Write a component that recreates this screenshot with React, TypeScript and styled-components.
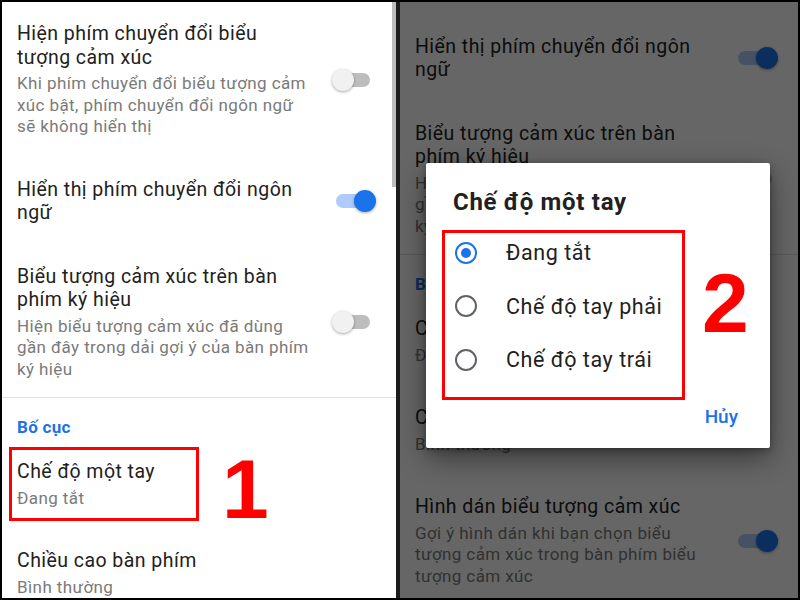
import styled, { createGlobalStyle } from "styled-components";

const GlobalStyle = createGlobalStyle`
  html, body {
    margin: 0;
    padding: 0;
    background: #000;
  }
  body {
    font-family: Roboto, "Noto Sans", sans-serif;
  }
`;

type Pref = {
  title: string;
  summary?: string;
  toggle?: "on" | "off";
  marked?: boolean;
};

type Section = { category?: string; items: Pref[] };

const sections: Section[] = [
  {
    items: [
      {
        title: "Hiện phím chuyển đổi biểu tượng cảm xúc",
        summary: "Khi phím chuyển đổi biểu tượng cảm xúc bật, phím chuyển đổi ngôn ngữ sẽ không hiển thị",
        toggle: "off",
      },
      { title: "Hiển thị phím chuyển đổi ngôn ngữ", toggle: "on" },
      {
        title: "Biểu tượng cảm xúc trên bàn phím ký hiệu",
        summary: "Hiện biểu tượng cảm xúc đã dùng gần đây trong dải gợi ý của bàn phím ký hiệu",
        toggle: "off",
      },
    ],
  },
  {
    category: "Bố cục",
    items: [
      { title: "Chế độ một tay", summary: "Đang tắt", marked: true },
      { title: "Chiều cao bàn phím", summary: "Bình thường" },
      {
        title: "Hình dán biểu tượng cảm xúc",
        summary: "Gợi ý hình dán khi bạn chọn biểu tượng cảm xúc trong bàn phím biểu tượng cảm xúc",
        toggle: "on",
      },
    ],
  },
];

const oneHandOptions = ["Đang tắt", "Chế độ tay phải", "Chế độ tay trái"];

const Frame = styled.div`
  box-sizing: border-box;
  width: 800px;
  height: 600px;
  border: 2px solid #000;
  display: grid;
  grid-template-columns: 394px 4px 1fr;
  background: #000;
  overflow: hidden;
`;

const Panel = styled.div<{ $dimmed?: boolean }>`
  position: relative;
  background: #fff;
  overflow: hidden;
  height: 596px;

  ${(p) =>
    p.$dimmed &&
    `
    &::after {
      content: "";
      position: absolute;
      inset: 0;
      background: rgba(0, 0, 0, 0.6);
    }
  `}
`;

const Gutter = styled.div`
  background: #1c1c1c;
`;

const Scrollbar = styled.div`
  position: absolute;
  right: 0;
  top: 0;
  width: 4px;
  height: 185px;
  background: #bdbdbd;
`;

const List = styled.div<{ $scroll: number }>`
  margin-top: ${(p) => -p.$scroll}px;
`;

const Group = styled.section<{ $ruled?: boolean }>`
  border-top: ${(p) => (p.$ruled ? "1px solid #e0e0e0" : "none")};
`;

const Category = styled.div`
  padding: 18px 16px 2px 15px;
  font-size: 17px;
  letter-spacing: 0.3px;
  line-height: 22px;
  font-weight: 700;
  color: #1a73e8;
`;

const Row = styled.div`
  position: relative;
  display: flex;
  align-items: center;
  gap: 22px;
  padding: 20px 20px 20px 15px;

  &:last-child {
    padding-bottom: 17px;
  }
`;

const TextCol = styled.div`
  flex: 1;
  min-width: 0;
`;

const Title = styled.div`
  font-size: 19.5px;
  letter-spacing: 0.45px;
  line-height: 23.5px;
  color: #212121;
`;

const Summary = styled.div`
  margin-top: 4px;
  font-size: 17px;
  letter-spacing: 0.4px;
  line-height: 21.5px;
  color: #7a7a7a;
`;

const Switch = styled.span<{ $on: boolean }>`
  position: relative;
  flex: none;
  width: 44px;
  height: 22px;

  &::before {
    content: "";
    position: absolute;
    left: 4px;
    top: 4px;
    width: 34px;
    height: 14px;
    border-radius: 7px;
    background: ${(p) => (p.$on ? "#aecbfa" : "#bdbdbd")};
  }

  &::after {
    content: "";
    position: absolute;
    top: 0;
    left: ${(p) => (p.$on ? "22px" : "0")};
    width: 22px;
    height: 22px;
    border-radius: 50%;
    background: ${(p) => (p.$on ? "#1a73e8" : "#f1f1f1")};
    box-shadow: 0 1px 3px rgba(0, 0, 0, 0.35);
  }
`;

const RedBox = styled.div<{ $left: number; $top: number; $w: number; $h: number }>`
  position: absolute;
  left: ${(p) => p.$left}px;
  top: ${(p) => p.$top}px;
  width: ${(p) => p.$w}px;
  height: ${(p) => p.$h}px;
  box-sizing: border-box;
  border: 3px solid #f00;
  pointer-events: none;
`;

const BigNumber = styled.div<{ $left: number; $top: number }>`
  position: absolute;
  left: ${(p) => p.$left}px;
  top: ${(p) => p.$top}px;
  font-family: "Liberation Sans", Arial, sans-serif;
  font-weight: 700;
  font-size: 84px;
  line-height: 1;
  color: #f00;
`;

const Dialog = styled.div`
  position: absolute;
  z-index: 2;
  left: 26px;
  top: 161px;
  width: 344px;
  height: 285px;
  box-sizing: border-box;
  background: #fff;
  border-radius: 2px;
  box-shadow: 0 10px 28px rgba(0, 0, 0, 0.45), 0 2px 6px rgba(0, 0, 0, 0.3);
`;

const DialogTitle = styled.div`
  padding: 25px 24px 0 27px;
  font-size: 24px;
  letter-spacing: 0.7px;
  line-height: 28px;
  font-weight: 700;
  color: #212121;
`;

const Options = styled.div`
  margin-top: 10px;
`;

const Option = styled.label`
  display: flex;
  align-items: center;
  gap: 29px;
  height: 53.5px;
  padding-left: 29px;
  font-size: 21.5px;
  letter-spacing: 0.55px;
  color: #212121;
`;

const Radio = styled.span<{ $checked: boolean }>`
  flex: none;
  box-sizing: border-box;
  width: 22px;
  height: 22px;
  border-radius: 50%;
  border: 2px solid ${(p) => (p.$checked ? "#1a73e8" : "#5f6368")};
  display: grid;
  place-items: center;

  &::after {
    content: "";
    width: 10px;
    height: 10px;
    border-radius: 50%;
    background: ${(p) => (p.$checked ? "#1a73e8" : "transparent")};
  }
`;

const Actions = styled.div`
  display: flex;
  justify-content: flex-end;
  padding: 18px 32px 18px;
`;

const TextButton = styled.span`
  font-size: 19px;
  line-height: 24px;
  font-weight: 500;
  color: #1a73e8;
`;

const SettingsList = ({ scroll, annotate }: { scroll: number; annotate?: boolean }) => (
  <List $scroll={scroll}>
    {sections.map((section, i) => (
      <Group key={i} $ruled={i > 0}>
        {section.category && <Category>{section.category}</Category>}
        {section.items.map((item) => (
          <Row key={item.title}>
            <TextCol>
              <Title>{item.title}</Title>
              {item.summary && <Summary>{item.summary}</Summary>}
            </TextCol>
            {item.toggle && <Switch $on={item.toggle === "on"} />}
            {annotate && item.marked && (
              <>
                <RedBox $left={7} $top={7} $w={190} $h={74} />
                <BigNumber $left={220} $top={7}>1</BigNumber>
              </>
            )}
          </Row>
        ))}
      </Group>
    ))}
  </List>
);

const App = () => {
  return (
    <>
      <GlobalStyle />
      <Frame>
        <Panel>
          <SettingsList scroll={0} annotate />
          <Scrollbar />
        </Panel>
        <Gutter />
        <Panel $dimmed>
          <SettingsList scroll={143} />
          <Dialog>
            <DialogTitle>Chế độ một tay</DialogTitle>
            <Options>
              {oneHandOptions.map((label, i) => (
                <Option key={label}>
                  <Radio $checked={i === 0} />
                  {label}
                </Option>
              ))}
            </Options>
            <Actions>
              <TextButton>Hủy</TextButton>
            </Actions>
            <RedBox $left={16} $top={67} $w={243} $h={170} />
            <BigNumber $left={276} $top={98}>2</BigNumber>
          </Dialog>
        </Panel>
      </Frame>
    </>
  );
};

export default App;
